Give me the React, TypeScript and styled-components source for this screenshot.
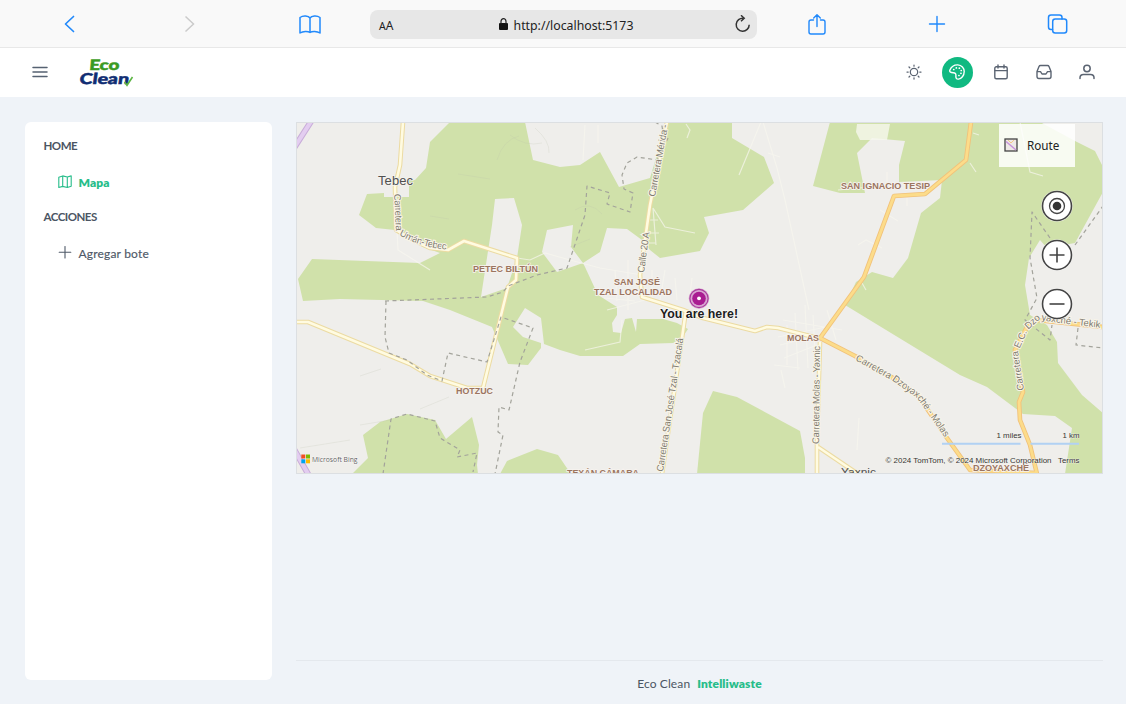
import React from "react";
import styled, { createGlobalStyle } from "styled-components";

const GlobalStyle = createGlobalStyle`
  * { box-sizing: border-box; }
  body { margin: 0; background: #eff3f8; font-family: Lato, sans-serif; color: #4b5563; }
  svg { display: block; }
`;

const Page = styled.div`
  display: flex;
  flex-direction: column;
  height: 704px;
  overflow: hidden;
`;

const BrowserBar = styled.header`
  display: grid;
  grid-template-columns: repeat(3, 120px) 387px repeat(3, 120px);
  align-items: center;
  justify-items: center;
  height: 48px;
  padding: 1px 0 0 10px;
  background: #f9f9f9;
  border-bottom: 1px solid #e8e8e8;
  color: #2189fb;
`;

const AddressField = styled.div`
  display: grid;
  grid-template-columns: 1fr auto 1fr;
  align-items: center;
  width: 387px;
  height: 29px;
  padding: 0 6px 0 9px;
  border-radius: 8px;
  background: #e7e7e7;
  color: #222;
  font-family: "Noto Sans", sans-serif;
`;

const TextSize = styled.span`
  font-size: 12px;
  padding-top: 2px;
  small { font-size: 10.5px; }
`;

const Address = styled.span`
  display: flex;
  align-items: center;
  gap: 6px;
  font-size: 12.3px;
  padding: 2px 0 0 2px;
  svg { margin-bottom: 1px; }
`;

const Reload = styled.span`
  justify-self: end;
`;

const TopBar = styled.nav`
  display: flex;
  align-items: center;
  justify-content: space-between;
  height: 49px;
  padding: 0 17.5px 0 32px;
  background: #fff;
`;

const Brand = styled.div`
  display: flex;
  align-items: center;
  gap: 28px;
  color: #566272;
`;

const Actions = styled.div`
  display: grid;
  grid-template-columns: repeat(5, 43.2px);
  align-items: center;
  justify-items: center;
  color: #5b6472;
  & > svg { margin-bottom: 2px; }
`;

const RoundAction = styled.span`
  display: flex;
  align-items: center;
  justify-content: center;
  width: 31px;
  height: 31px;
  padding-bottom: 2px;
  border-radius: 50%;
  background: #10b981;
  color: #fff;
`;

const Body = styled.div`
  display: flex;
  flex: 1;
  gap: 24px;
  padding: 25px 23px 0 25px;
`;

const Sidebar = styled.aside`
  width: 247px;
  height: 558px;
  padding: 15.5px 18.5px;
  border-radius: 6px;
  background: #fff;
`;

const MenuTitle = styled.h2`
  margin: 0 0 12px;
  font-size: 11.5px;
  line-height: 16px;
  font-weight: 700;
  letter-spacing: -0.5px;
`;

const MenuItem = styled.a<{ $active?: boolean }>`
  display: flex;
  align-items: center;
  gap: 7px;
  height: 33px;
  margin-bottom: 10px;
  padding: 1px 0 0 14px;
  font-size: 12px;
  font-weight: ${(p) => (p.$active ? 800 : 400)};
  color: ${(p) => (p.$active ? "#27bd8a" : "#4f5968")};
  letter-spacing: ${(p) => (p.$active ? "0.1px" : "0.18px")};
  -webkit-text-stroke: ${(p) => (p.$active ? "0" : "0.15px")};
  svg { margin-bottom: 1px; }
`;

const Content = styled.main`
  display: flex;
  flex-direction: column;
  justify-content: space-between;
  width: 807px;
`;

const MapFrame = styled.section`
  position: relative;
  height: 352px;
  border: 1px solid #dcdfe2;
  overflow: hidden;
  font-family: "Liberation Sans", sans-serif;
`;

const RouteButton = styled.div`
  position: absolute;
  top: 1px;
  left: 702px;
  display: flex;
  align-items: center;
  gap: 9px;
  width: 76px;
  height: 43px;
  padding: 0 0 1px 5px;
  background: rgba(255, 255, 255, 0.85);
  color: #222;
  font-family: "Noto Sans", sans-serif;
  font-size: 11.7px;
`;

const Controls = styled.div`
  position: absolute;
  top: 66.5px;
  left: 744px;
  display: flex;
  flex-direction: column;
  gap: 17.2px;
`;

const Footer = styled.footer`
  display: flex;
  justify-content: center;
  gap: 7px;
  height: 44px;
  padding-top: 14px;
  border-top: 1px solid #e4e8ed;
  font-size: 12px;
  line-height: 17px;
  letter-spacing: 0.12px;
  b { color: #27bd8a; font-weight: 800; }
`;

type IconProps = { size?: number; w?: number; children: React.ReactNode; box?: number };
const Icon = ({ size = 24, w = 1.6, box = 24, children }: IconProps) => (
  <svg width={size} height={size} viewBox={`0 0 ${box} ${box}`} fill="none" stroke="currentColor" strokeWidth={w} strokeLinecap="round" strokeLinejoin="round">
    {children}
  </svg>
);

const Logo = () => (
  <svg width="60" height="34" viewBox="76 56 60 34" fontFamily="Lato, sans-serif" fontWeight="900">
    <text transform="translate(89 70.4) skewX(-5)" fontSize="14.5" fill="#3a9a24" stroke="#3a9a24" strokeWidth=".5" textLength="30" lengthAdjust="spacingAndGlyphs">Eco</text>
    <text transform="translate(79 84.2) skewX(-8)" fontSize="15" fill="#102d73" stroke="#102d73" strokeWidth=".5" textLength="49.5" lengthAdjust="spacingAndGlyphs">Clean</text>
    <path d="M124.5 82l2.500 3.300 5.500-8.300" fill="none" stroke="#5db544" strokeWidth="1.6" />
  </svg>
);

const forests = [
  "M450 122L430 142L426 168L415 180H409V197H384V193L367 194L359 215L376 228L395 230L423 247L440 253L420 263L312 259L298 279L303 301L340 299L423 301L450 310L492 327L508 364L528 365L541 348V343L523 337L513 327L525 308L541 318L544 344L560 350L580 356H623L640 344L673 343L682 338L688 329L677 323L663 319H637L636 332L632 318L625 319L621 333L613 332L612 323L617 315V307L598 295L585 267L583 263L600 252L607 228L627 229L642 240L650 250L660 258L700 251L709 233L704 217L743 210L774 183L764 157L732 138V122H667L650 178L619 187L600 152L580 165L560 167L533 160L525 122Z",
  "M352 474L368 458L363 435L380 422L407 414L435 420L446 439L472 417L479 445L477 465L478 474Z",
  "M500 474L507 461L537 449L558 455L571 474Z",
  "M697 474L703 413L713 391L737 397L800 431L805 458V474Z",
  "M830 122L813 186L840 193H865L857 153L872 138L905 141L899 165V182L942 180L940 198L921 213L908 258L893 278L872 272L856 282L845 305L960 375L987 387L1023 414L1055 416L1072 428L1065 474H1103V413L1082 395L1058 363L1057 342L1047 325L1030 315L1025 285L1029 258L1040 240L1047 248L1075 243L1103 192V167L1095 151L1077 142L1040 122Z",
];

const clearings = [
  "M495 199L514 198L522 225L517 258L507 288L481 297L492 225Z",
  "M547 230L573 225L571 247L583 263L557 272L542 252Z",
];

const faintRoads = [
  "M397 230L398 250L430 270", "M517 258L530 260L545 253L570 260L600 268L642 275", "M585 350L620 342L622 320",
  "M653 208L665 227L695 233M653 208L656 245M646 220H658M648 233H659M647 243H656", "M761 122L739 175M763 122L777 168L785 200L809 310",
  "M585 125L583 160M598 125V143M686 124L690 130L687 138", "M768 153L780 157", "M780 345L817 336M784 358L822 343M787 325V365M795 313L798 370M805 305L808 368M813 315L815 350M774 365L800 368M778 337L826 327M783 320L842 330M781 370L785 388M827 310L836 340",
  "M604 298L635 301M615 270L617 301M628 260V310M607 310L645 300M652 270V300M665 270L660 300M675 278L677 300M692 278L690 295",
  "M858 245L866 240L882 248M880 210L898 221M907 198V206M887 172V182M970 163L976 172M973 133L979 135",
  "M1020 122L1030 172L1043 176", "M838 190L900 184M862 283L866 290", "M859 418L857 450",
];

const dashed = [
  "M385 301L487 297L503 292L508 286L537 275L567 268L585 215L587 186L610 193L607 204L630 212L633 193L624 189L622 175L627 163L637 157L657 160L668 138",
  "M655 122L662 126L663 133",
  "M386 301L385 337L389 353L407 360L427 375L442 381L448 353L487 362L501 317L533 328L520 362L509 410L499 407L498 432L503 435L495 474",
  "M383 474L391 419L407 414L435 421L440 438L460 450L457 457L477 453L473 472",
  "M1050 238L1032 212L1030 258L1037 298L1025 320L1050 340L1052 325", "M1075 245L1103 206", "M1078 328L1076 345L1103 348",
];

const minorRoads = [
  "M403 122L400 165L395 187L396 230L413 240L430 248L448 250L464 241L517 258L516 280L508 287L483 388",
  "M297 322L308 322L410 364L430 376L467 388L483 388",
  "M667 122L650 205L640 275L642 297L683 310L703 318L755 331L767 327L778 328L818 338",
  "M686 310L682 338L662 474", "M820 342L817 442V474", "M818 447L858 474",
];

const mainRoads = [
  "M971 122L966 160L925 194L894 196L864 277L820 338L855 356L893 378L919 397L947 438L970 470L1037 473",
  "M1103 327L1037 320L1027 327L1015 350L1023 392L1019 402L1020 420L1030 445L1037 474",
];

type TownProps = { x: number; y: number; len: number; children: string };
const Town = ({ x, y, len, children }: TownProps) => (
  <text x={x} y={y} textLength={len} lengthAdjust="spacingAndGlyphs" fontSize="9.3" fontWeight="700" fill="#9b755f" stroke="#f7f3ef" strokeWidth="1.6" paintOrder="stroke">{children}</text>
);

type RoadNameProps = { id: string; d: string; len: number; children: string };
const RoadName = ({ id, d, len, children }: RoadNameProps) => (
  <>
    <path id={id} d={d} fill="none" />
    <text fontSize="9.6" fill="#7f7b70" stroke="#f8f4e8" strokeWidth="2" paintOrder="stroke" textLength={len} lengthAdjust="spacing">
      <textPath href={`#${id}`} textLength={len} lengthAdjust="spacing">{children}</textPath>
    </text>
  </>
);

const MapDrawing = () => (
  <svg width="805" height="350" viewBox="297 123 805 350" fontFamily="'Liberation Sans', sans-serif">
    <rect x="296" y="122" width="807" height="352" fill="#efeeeb" />
    <g fill="#d0e1aa">{forests.map((d) => <path key={d} d={d} />)}</g>
    <g fill="#efeeeb">{clearings.map((d) => <path key={d} d={d} />)}</g>
    <g fill="none" stroke="#b9bca8" strokeWidth="1" opacity=".2">
      <path d="M510 135Q525 147 542 143M497 160Q503 140 519 136M535 128Q550 141 549 153M430 216L449 219M458 174L490 179M575 210Q590 200 602 214M570 247L590 239M300 448L350 440M360 425L390 420M360 376L381 369M420 409L449 397" />
    </g>
    <g fill="none" stroke="#f8f7ef" strokeWidth="1.2" opacity=".7">{faintRoads.map((d) => <path key={d} d={d} />)}</g>
    <path d="M857 124H890L887 140H860L856 132Z" fill="#f6f7ed" opacity=".8" />
    <path d="M312 120L294 148M294 449L312 481" stroke="#c8add9" strokeWidth="6" />
    <path d="M312 120L294 148M294 449L312 481" stroke="#e3cdf0" strokeWidth="4" />
    <g fill="none" strokeLinejoin="round">
      <g stroke="#ecdba2" strokeWidth="4.6">{minorRoads.map((d) => <path key={d} d={d} />)}</g>
      <g stroke="#fffbe1" strokeWidth="2.6">{minorRoads.map((d) => <path key={d} d={d} />)}</g>
      <g stroke="#f1c27a" strokeWidth="4.6">{mainRoads.map((d) => <path key={d} d={d} />)}</g>
      <g stroke="#fcdc8a" strokeWidth="2.8">{mainRoads.map((d) => <path key={d} d={d} />)}</g>
      <g stroke="#a3a39b" strokeWidth="1.2" strokeDasharray="4 3.5">{dashed.map((d) => <path key={d} d={d} />)}</g>
    </g>

    <RoadName id="uman-a" d="M394 194L395 210L396 233" len={37}>Carretera</RoadName>
    <RoadName id="uman-b" d="M399 235Q423 249 454 250" len={50}>Umán-Tebec</RoadName>
    <RoadName id="merida" d="M655 197L669 120" len={73}>Carretera Mérida -</RoadName>
    <RoadName id="calle" d="M644 273L650 229" len={41}>Calle 20 A</RoadName>
    <RoadName id="tzacala" d="M663 472L684 334" len={135}>Carretera San José Tzal - Tzacalá</RoadName>
    <RoadName id="yaxnic" d="M819 444L820 343" len={98}>Carretera Molas - Yaxnic</RoadName>
    <RoadName id="molas" d="M855 360L893 381L917 398L951 446" len={121}>Carretera Dzoyaxché - Molas</RoadName>
    <RoadName id="tekik" d="M1024 390L1018 352L1028 330L1039 320L1060 323L1101 328" len={139}>Carretera E.C. Dzoyaxché - Tekik</RoadName>

    <Town x={473} y={272} len={65}>PETEC BILTÚN</Town>
    <Town x={456} y={394} len={37}>HOTZUC</Town>
    <Town x={614} y={284.5} len={46}>SAN JOSÉ</Town>
    <Town x={594} y={294.5} len={78}>TZAL LOCALIDAD</Town>
    <Town x={787} y={341} len={32}>MOLAS</Town>
    <Town x={841} y={189.3} len={89}>SAN IGNACIO TESIP</Town>
    <Town x={567} y={476} len={72}>TEXÁN CÁMARA</Town>
    <Town x={973} y={471} len={56}>DZOYAXCHÉ</Town>
    <text x="378" y="185" textLength="35" fontSize="13" fill="#505050" stroke="#f4f2ee" strokeWidth="1.5" paintOrder="stroke">Tebec</text>
    <text x="841" y="476" textLength="35" lengthAdjust="spacingAndGlyphs" fontSize="11.5" fill="#505050">Yaxnic</text>

    <circle cx="699" cy="298.5" r="10.3" fill="#d9a5d2" />
    <circle cx="699" cy="298.5" r="9.1" fill="none" stroke="#a73a9a" strokeWidth="1.1" />
    <circle cx="699" cy="298.5" r="6.8" fill="#a91c91" />
    <circle cx="699" cy="298.3" r="1.9" fill="#fff" />
    <text x="660" y="318" textLength="78" lengthAdjust="spacingAndGlyphs" fontSize="12.5" fontWeight="700" fill="#202020" stroke="#fff" strokeWidth="1" paintOrder="stroke">You are here!</text>

    <path d="M301.3 454.5h4v4h-4z" fill="#f25022" />
    <path d="M306 454.5h4v4h-4z" fill="#7fba00" />
    <path d="M301.3 459.3h4v4h-4z" fill="#00a4ef" />
    <path d="M306 459.3h4v4h-4z" fill="#ffb900" />
    <text x="312" y="462" textLength="45.5" lengthAdjust="spacingAndGlyphs" fontSize="7.6" fill="#606060" stroke="#fff" strokeWidth=".6" paintOrder="stroke" fontFamily="'Open Sans', sans-serif">Microsoft Bing</text>
    <path d="M942 443.7H1020.5M1030.5 443.7H1079" stroke="#b1d1f3" strokeWidth="2" />
    <g fontSize="7.8" fill="#333" stroke="#f6f4ee" strokeWidth=".6" paintOrder="stroke">
      <text x="996.5" y="438.3" textLength="25" lengthAdjust="spacingAndGlyphs">1 miles</text>
      <text x="1062.5" y="438.3" textLength="17" lengthAdjust="spacingAndGlyphs">1 km</text>
      <text x="885.5" y="463.3" textLength="166" lengthAdjust="spacingAndGlyphs">© 2024 TomTom, © 2024 Microsoft Corporation</text>
      <text x="1058" y="463.3" textLength="21.5" lengthAdjust="spacingAndGlyphs">Terms</text>
    </g>
  </svg>
);

const ControlIcon = ({ children }: { children: React.ReactNode }) => (
  <svg width="32" height="32" viewBox="0 0 32 32" fill="none" stroke="#444" strokeWidth="1.6">
    <circle cx="16" cy="16" r="15.6" fill="#fff" stroke="none" />
    <circle cx="16" cy="16" r="14.5" />
    {children}
  </svg>
);

export default function App() {
  return (
    <Page>
      <GlobalStyle />
      <BrowserBar>
        <Icon w={1.7}><path d="M15.5 4.500L7.500 12l8 7.500" /></Icon>
        <svg width="24" height="24" viewBox="0 0 24 24" fill="none" stroke="#cbcbcb" strokeWidth="1.5"><path d="M7.500 4.500L15.500 12l-8 7.500" /></svg>
        <Icon w={1.5}><path d="M12 20.500V6C10.500 3.700 5 3.300 2 5.500V21C5 19 10 19 12 20.500C14 19 19 19 22 21V5.500C19 3.300 13.500 3.700 12 6" /></Icon>
        <AddressField>
          <TextSize><small>A</small>A</TextSize>
          <Address>
            <svg width="9" height="13" viewBox="0 0 9 13"><rect y="5" width="9" height="7" rx="1" fill="#111" /><path d="M2 6V3.500a2.500 2.800 0 0 1 5 0V6" fill="none" stroke="#222" strokeWidth="1.2" /></svg>
            http://localhost:5173
          </Address>
          <Reload>
            <svg width="17" height="19" viewBox="0 0 17 19" fill="none" stroke="#333" strokeWidth="1.5"><path d="M9.500 3.200A6.500 6.500 0 1 0 15.200 9.700" /><path d="M7 .3l3.200 3-3.200 3" /></svg>
          </Reload>
        </AddressField>
        <Icon w={1.4}><path d="M8.500 8H6a2 2 0 0 0-2 2V20a2 2 0 0 0 2 2h12a2 2 0 0 0 2-2V10a2 2 0 0 0-2-2h-2.500M12 14.500V3M8.700 6L12 2.700l3.300 3.300" /></Icon>
        <Icon w={1.4}><path d="M12 4.500v15M4.500 12h15" /></Icon>
        <Icon w={1.5}><rect x="7.700" y="7" width="14" height="14" rx="2.500" /><path d="M7.500 17.500H6A2.500 2.500 0 0 1 3.500 15V5.500A2.500 2.500 0 0 1 6 3H14.500A2.500 2.500 0 0 1 17 5.500V7" /></Icon>
      </BrowserBar>

      <TopBar>
        <Brand>
          <svg width="16" height="18" viewBox="0 0 16 18" fill="none" stroke="currentColor" strokeWidth="1.5" strokeLinecap="round"><path d="M1 3.500h14M1 8h14M1 12.500h14" /></svg>
          <Logo />
        </Brand>
        <Actions>
          <Icon size={16} box={16} w={1.25}><circle cx="8" cy="8" r="3.700" /><path d="M8 1v1.200M8 13.800V15M1 8h1.200M13.800 8H15M3 3l.8.8M12.200 12.200l.8.8M3 13l.8-.8M12.200 3.800L13 3" /></Icon>
          <RoundAction>
            <Icon size={16} box={16} w={1.4}>
              <path d="M.9 6C2.600 2 5.800.8 8.800.9c3.800.2 6.400 3.200 6.400 6.600 0 4.200-2.800 7.200-5.700 7.600-2.100.2-2.800-1.300-2.600-3.300.2-2-.7-2.900-2.600-3C2.200 8.700.1 8.200.9 6z" />
              <path d="M4.700 5.500h.1M7.300 3.900h.1M10.300 4.200h.1M12.200 6.500h.1M11.900 9.300h.1M9.900 11.500h.1" strokeWidth="1.7" />
            </Icon>
          </RoundAction>
          <Icon size={16} box={16} w={1.4}><rect x="1.800" y="2.800" width="12.400" height="12" rx="1.500" /><path d="M2 6.600h12M5 1v3M11 1v3" /></Icon>
          <Icon size={16} box={16} w={1.4}><path d="M1 7.600L3 2.500Q3.400 1.500 4.500 1.500h7q1.100 0 1.500 1l2 5.100v5q0 1.900-1.900 1.900H2.900Q1 14.500 1 12.600zM1 7.600h3.500L6 10h4l1.500-2.400H15" /></Icon>
          <Icon size={16} box={16} w={1.5}><circle cx="8" cy="4.500" r="3.200" /><path d="M1 14.500v-.7c0-2.200 1.600-3.300 3.500-3.300h7c1.900 0 3.500 1.100 3.500 3.300v.7" /></Icon>
        </Actions>
      </TopBar>

      <Body>
        <Sidebar>
          <MenuTitle>HOME</MenuTitle>
          <MenuItem $active>
            <Icon size={14} box={14} w={1.1}><path d="M.8 2.200L4.700.9 9.300 2 13.200.9V11.200L9.300 12.500 4.700 11.400.8 12.500zM4.700.9v10.500M9.300 2v10.500" /></Icon>
            Mapa
          </MenuItem>
          <MenuTitle>ACCIONES</MenuTitle>
          <MenuItem>
            <Icon size={14} box={14} w={1.1}><path d="M7 .5v11.500M1.200 6.200h11.600" /></Icon>
            Agregar bote
          </MenuItem>
        </Sidebar>

        <Content>
          <MapFrame>
            <MapDrawing />
            <RouteButton>
              <svg width="14" height="14" viewBox="0 0 14 14"><rect x="1" y="1" width="12" height="12" fill="#eee9e6" stroke="#444" strokeWidth="1.3" /><path d="M2 3.500L12 12" stroke="#c793d9" strokeWidth="1.5" /><path d="M4 2l3 3 3-3" fill="none" stroke="#f4c889" strokeWidth="1" /></svg>
              Route
            </RouteButton>
            <Controls>
              <ControlIcon><circle cx="16" cy="16" r="7.500" strokeWidth="1.3" /><circle cx="16" cy="16" r="4.300" fill="#333" stroke="none" /></ControlIcon>
              <ControlIcon><path d="M8.500 16h15M16 8.500v15" /></ControlIcon>
              <ControlIcon><path d="M8.500 16h15" /></ControlIcon>
            </Controls>
          </MapFrame>
          <Footer>
            <span>Eco Clean</span>
            <b>Intelliwaste</b>
          </Footer>
        </Content>
      </Body>
    </Page>
  );
}
